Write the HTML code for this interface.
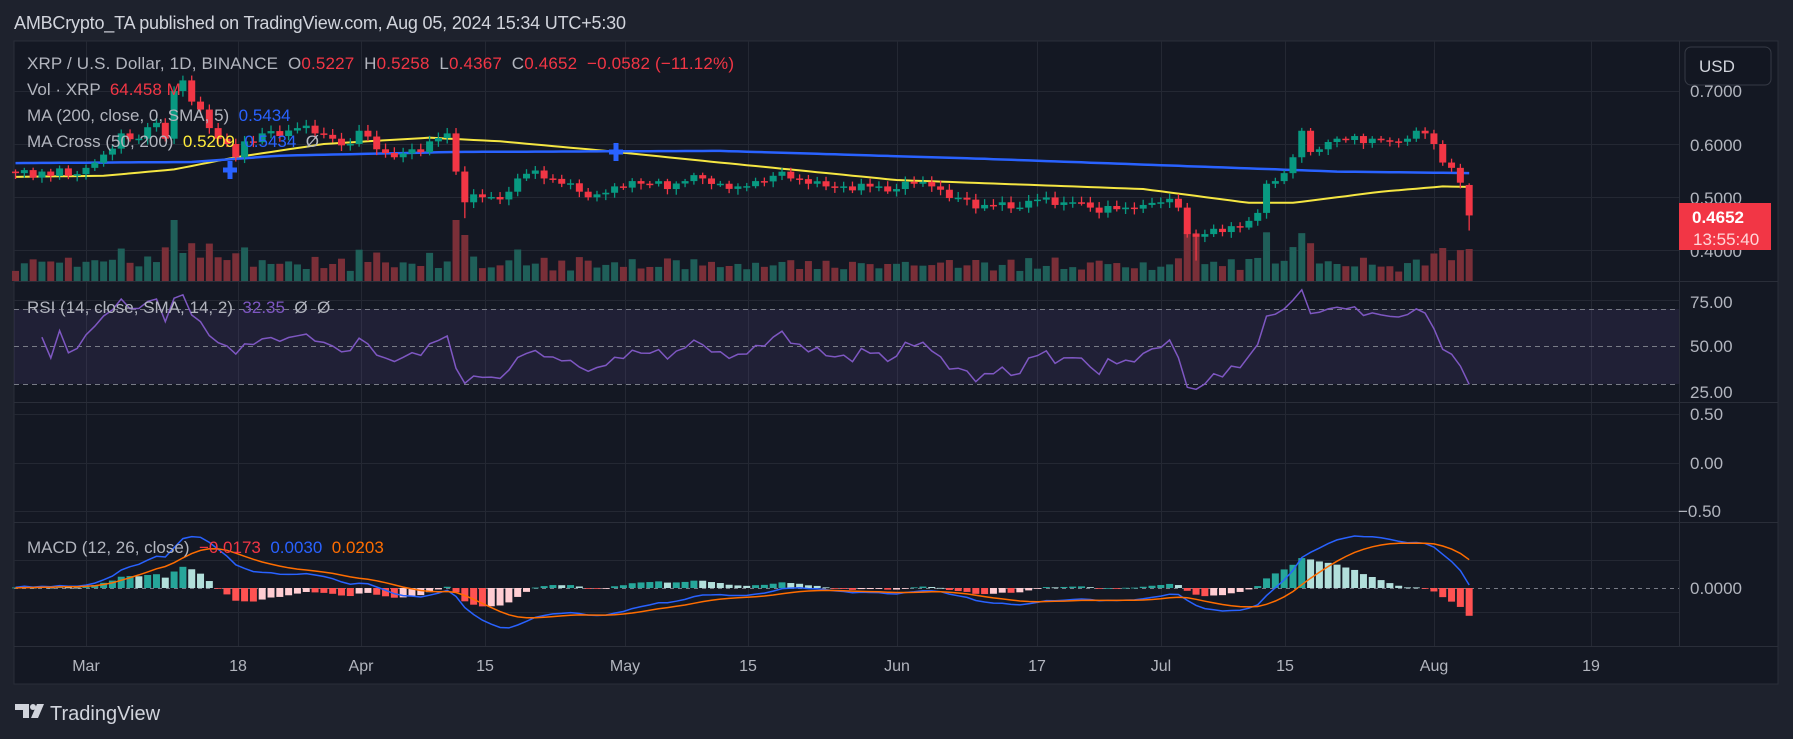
<!DOCTYPE html>
<html><head><meta charset="utf-8"><style>
html,body{margin:0;padding:0;background:#1e222d;width:1793px;height:739px;overflow:hidden}
svg{position:absolute;left:0;top:0;font-family:"Liberation Sans",sans-serif}
.pre{white-space:pre}
</style></head><body>
<svg id="s" width="1793" height="739" xmlns="http://www.w3.org/2000/svg">
<rect x="0" y="0" width="1793" height="739" fill="#1e222d"/>
<text x="14" y="29" font-size="18" fill="#d1d4dc" textLength="612">AMBCrypto_TA published on TradingView.com, Aug 05, 2024 15:34 UTC+5:30</text>
<rect x="14" y="41" width="1764" height="643" fill="#141823" stroke="#2a2e39" stroke-width="1"/>
<g id="grid"></g>
<g id="plot"></g>
<line x1="14" y1="281.5" x2="1778" y2="281.5" stroke="#2a2e39"/>
<line x1="14" y1="402.5" x2="1778" y2="402.5" stroke="#2a2e39"/>
<line x1="14" y1="522.5" x2="1778" y2="522.5" stroke="#2a2e39"/>
<line x1="14" y1="646.5" x2="1778" y2="646.5" stroke="#2a2e39"/>
<g font-size="17" fill="#b2b5be" class="pre">
<text x="27" y="69" class="pre" textLength="707">XRP / U.S. Dollar, 1D, BINANCE  O<tspan fill="#f23645">0.5227</tspan>  H<tspan fill="#f23645">0.5258</tspan>  L<tspan fill="#f23645">0.4367</tspan>  C<tspan fill="#f23645">0.4652</tspan>  <tspan fill="#f23645">−0.0582 (−11.12%)</tspan></text>
<text x="27" y="95" class="pre">Vol · XRP  <tspan fill="#f23645">64.458 M</tspan></text>
<text x="27" y="121" class="pre">MA (200, close, 0, SMA, 5)  <tspan fill="#2962ff">0.5434</tspan></text>
<text x="27" y="147" class="pre">MA Cross (50, 200)  <tspan fill="#ffeb3b">0.5209</tspan>  <tspan fill="#2962ff">0.5434</tspan>  Ø</text>
<text x="27" y="313" class="pre">RSI (14, close, SMA, 14, 2)  <tspan fill="#7e57c2">32.35</tspan>  Ø  Ø</text>
<text x="27" y="553" class="pre">MACD (12, 26, close)  <tspan fill="#f23645">−0.0173</tspan>  <tspan fill="#2962ff">0.0030</tspan>  <tspan fill="#ff6d00">0.0203</tspan></text>
</g>
<g font-size="17" fill="#b2b5be">
<text x="1690" y="97">0.7000</text>
<text x="1690" y="151">0.6000</text>
<text x="1690" y="204">0.5000</text>
<text x="1690" y="257">0.4000</text>
<text x="1690" y="308">75.00</text>
<text x="1690" y="352">50.00</text>
<text x="1690" y="398">25.00</text>
<text x="1690" y="420">0.50</text>
<text x="1690" y="469">0.00</text>
<text x="1678" y="517">−0.50</text>
<text x="1690" y="594">0.0000</text>
</g>
<rect x="1685" y="47" width="86" height="38" rx="6" fill="#131722" stroke="#363a45"/>
<text x="1699" y="72" font-size="17" fill="#d1d4dc">USD</text>
<rect x="1679" y="203" width="92" height="47" fill="#f23645"/>
<text x="1692" y="223" font-size="17" font-weight="bold" fill="#ffffff">0.4652</text>
<text x="1693" y="245" font-size="17" fill="#ffd6d9">13:55:40</text>
<g font-size="16" fill="#b2b5be" text-anchor="middle">
<text x="86" y="671">Mar</text><text x="238" y="671">18</text><text x="361" y="671">Apr</text><text x="485" y="671">15</text>
<text x="625" y="671">May</text><text x="748" y="671">15</text><text x="897" y="671">Jun</text><text x="1037" y="671">17</text>
<text x="1161" y="671">Jul</text><text x="1285" y="671">15</text><text x="1434" y="671">Aug</text><text x="1591" y="671">19</text>
</g>
<g fill="#d1d4dc">
<path d="M15 704h14v14h-6v-8h-8z"/><circle cx="33" cy="707" r="3"/><path d="M37 704h7l-6 14h-7z"/>
<text x="50" y="720" font-size="20">TradingView</text>
</g>
</svg>
<script>
var NS="http://www.w3.org/2000/svg";
function el(p,t,a){var e=document.createElementNS(NS,t);for(var k in a)e.setAttribute(k,a[k]);p.appendChild(e);return e;}
var grid=document.getElementById('grid'),plot=document.getElementById('plot');
var vx=[86,238,361,485,625,748,897,1037,1161,1285,1434,1591];
vx.forEach(function(x){el(grid,'line',{x1:x+.5,y1:41,x2:x+.5,y2:646,stroke:'#242833'});});
[91,144,197,250,300,414,463,511,560,612].forEach(function(y){el(grid,'line',{x1:14,y1:y+.5,x2:1679,y2:y+.5,stroke:'#242833'});});
el(grid,'line',{x1:1679.5,y1:41,x2:1679.5,y2:646,stroke:'#2a2e39'});
var K=[[0,.545],[3,.548],[6,.54],[8,.555],[10,.58],[12,.62],[14,.61],[16,.64],[17,.61],[18,.70],[19,.72],[20,.68],[21,.665],[22,.63],[24,.60],[25,.575],[26,.605],[28,.62],[30,.615],[32,.63],[34,.62],[36,.61],[38,.60],[39,.625],[41,.59],[43,.575],[45,.59],[47,.605],[49,.62],[50,.548],[51,.49],[52,.505],[54,.50],[56,.51],[57,.535],[59,.55],[60,.535],[62,.525],[64,.51],[66,.505],[68,.52],[70,.53],[72,.525],[74,.515],[76,.53],[78,.535],[80,.525],[82,.52],[84,.53],[86,.54],[88,.535],[90,.525],[92,.52],[94,.52],[96,.525],[98,.52],[100,.515],[102,.525],[104,.52],[106,.498],[108,.495],[110,.485],[112,.49],[114,.48],[116,.495],[118,.485],[120,.49],[122,.48],[124,.483],[126,.48],[128,.485],[130,.49],[132,.48],[133,.43],[134,.425],[135,.43],[136,.44],[138,.445],[140,.455],[141,.47],[142,.525],[143,.53],[144,.545],[145,.575],[146,.625],[147,.585],[148,.59],[150,.61],[152,.615],[154,.61],[156,.605],[158,.61],[159,.625],[160,.62],[161,.60],[162,.565],[163,.555],[164,.527],[165,.4652]];
var N=166,C=[];
for(var i=0;i<N;i++){for(var j=0;j<K.length-1;j++){if(i>=K[j][0]&&i<=K[j+1][0]){var t=(i-K[j][0])/((K[j+1][0]-K[j][0])||1);C[i]=K[j][1]+(K[j+1][1]-K[j][1])*t;break;}}
 if(!K.some(function(k){return k[0]==i}))C[i]+=0.008*Math.sin(i*2.7)+0.005*Math.cos(i*1.3);}
function X(i){return 86+(i-8)*8.81;}
function Y(p){return 144+(0.6-p)*530;}
function lerpK(k,i){for(var j=0;j<k.length-1;j++){if(i>=k[j][0]&&i<=k[j+1][0]){var t=(i-k[j][0])/(k[j+1][0]-k[j][0]);return k[j][1]+(k[j+1][1]-k[j][1])*t;}}return k[k.length-1][1];}
var BK=[[0,.564],[20,.566],[30,.578],[50,.585],[80,.587],[110,.572],[130,.56],[150,.548],[165,.545]];
var YK=[[0,.538],[10,.54],[18,.552],[25,.575],[35,.6],[47,.612],[55,.605],[67,.587],[80,.565],[100,.532],[115,.523],[128,.515],[140,.489],[145,.489],[155,.51],[162,.52],[165,.519]];
var pb='',py='';
for(var i=0;i<N;i++){pb+=(i?'L':'M')+X(i).toFixed(1)+' '+Y(lerpK(BK,i)).toFixed(1);py+=(i?'L':'M')+X(i).toFixed(1)+' '+Y(lerpK(YK,i)).toFixed(1);}
for(var i=0;i<N;i++){var o=i?C[i-1]:C[i]+.003,up=C[i]>=o;var h=8+Math.abs(C[i]-o)*700+6*Math.abs(Math.sin(i*1.9));if(i==18)h=61;if(i==51)h=46;if(i==134)h=48;if(i==165)h=32;h=Math.min(h,61);
 el(plot,'rect',{x:X(i)-3.5,y:281-h,width:7,height:h,fill:up?'#1f5f59':'#7a2f38'});}
el(plot,'path',{d:py,fill:'none',stroke:'#f5e642','stroke-width':2});
el(plot,'path',{d:pb,fill:'none',stroke:'#2962ff','stroke-width':2.5});
[[230,170],[616,152]].forEach(function(c){el(plot,'rect',{x:c[0]-7,y:c[1]-2.5,width:14,height:5,fill:'#2962ff'});el(plot,'rect',{x:c[0]-2.5,y:c[1]-9,width:5,height:18,fill:'#2962ff'});});
for(var i=0;i<N;i++){var o=i?C[i-1]:C[i]+.003;if(i==165)o=.5227;var up=C[i]>=o,col=up?'#089981':'#f23645';
 var hi=Math.max(o,C[i])+.004+.007*Math.abs(Math.sin(i*3.1)),lo=Math.min(o,C[i])-.004-.007*Math.abs(Math.cos(i*2.3));if(i==165){hi=.5258;lo=.4367;}if(i==134)lo=.38;if(i==51)lo=.46;
 el(plot,'line',{x1:X(i),y1:Y(hi),x2:X(i),y2:Y(lo),stroke:col,'stroke-width':1.3});
 var t=Y(Math.max(o,C[i])),b=Y(Math.min(o,C[i]));el(plot,'rect',{x:X(i)-3.5,y:t,width:7,height:Math.max(b-t,1.5),fill:col});}
el(plot,'rect',{x:14,y:309,width:1665,height:75,fill:'rgba(126,87,194,0.12)'});
[309,346,384].forEach(function(y){el(plot,'line',{x1:14,y1:y+.5,x2:1679,y2:y+.5,stroke:'#787b86','stroke-dasharray':'5 4','stroke-width':1});});
var ag=0,al=0,pr='';
for(var i=1;i<N;i++){var d=C[i]-C[i-1],g=Math.max(d,0),l=Math.max(-d,0);if(i<=14){ag+=g/14;al+=l/14;}else{ag=(ag*13+g)/14;al=(al*13+l)/14;}
 var r=100-100/(1+ag/(al||1e-9));if(i<3)continue;pr+=(pr?'L':'M')+X(i).toFixed(1)+' '+(346-(r-50)*1.85).toFixed(1);}
el(plot,'path',{d:pr,fill:'none',stroke:'#7e57c2','stroke-width':1.5});
function ema(a,n){var k=2/(n+1),o=[a[0]];for(var i=1;i<a.length;i++)o[i]=a[i]*k+o[i-1]*(1-k);return o;}
var pre=[];for(var i=0;i<30;i++)pre.push(.54);var full=pre.concat(C);
var e12=ema(full,12),e26=ema(full,26),m=[];for(var i=0;i<full.length;i++)m[i]=e12[i]-e26[i];var sg=ema(m,9);
m=m.slice(30);sg=sg.slice(30);var mx=0;for(var i=0;i<N;i++)mx=Math.max(mx,Math.abs(m[i]));var sc=52/mx;
el(plot,'line',{x1:14,y1:588.5,x2:1679,y2:588.5,stroke:'#787b86','stroke-dasharray':'4 4'});
var pm='',ps='';
for(var i=0;i<N;i++){var h=m[i]-sg[i],ph=i?m[i-1]-sg[i-1]:h,col=h>=0?(h>=ph?'#26a69a':'#b2dfdb'):(h<=ph?'#ff5252':'#ffcdd2');
 var hy=h*sc*1.1;el(plot,'rect',{x:X(i)-3.5,y:hy>0?588-hy:588,width:7,height:Math.max(Math.abs(hy),.8),fill:col});
 pm+=(i?'L':'M')+X(i).toFixed(1)+' '+(588-m[i]*sc).toFixed(1);ps+=(i?'L':'M')+X(i).toFixed(1)+' '+(588-sg[i]*sc).toFixed(1);}
el(plot,'path',{d:pm,fill:'none',stroke:'#2962ff','stroke-width':1.5});
el(plot,'path',{d:ps,fill:'none',stroke:'#ff6d00','stroke-width':1.5});
</script>
</body></html>
